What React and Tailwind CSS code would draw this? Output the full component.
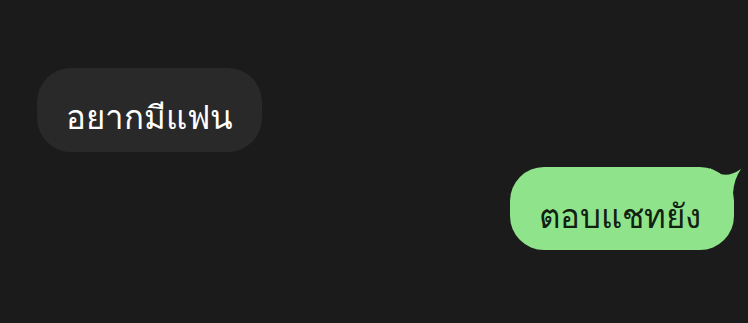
export default function App() {
  return (
    <div className="w-[748px] h-[323px] bg-[#1b1b1b] overflow-hidden flex flex-col" style={{ fontFamily: '"Noto Sans", "DejaVu Sans", sans-serif' }}>
      <div className="pt-[68px] pl-[37px]">
        <div className="flex items-center justify-center w-[225px] h-[84px] pt-[13px] rounded-[34px] bg-[#292929] text-white text-[33px] leading-none">
          อยากมีแฟน
        </div>
      </div>
      <div className="flex justify-end pt-[15px] pr-[14px]">
        <div className="relative flex items-center justify-center w-[224px] h-[83px] pt-[13px] pr-[4px] rounded-[34px] bg-[#8fe38b] text-[#112011] text-[33px] leading-none">
          ตอบแชทยัง
          <svg className="absolute left-[200px] top-0" width="40" height="40" viewBox="0 0 40 40">
            <path d="M0 1 Q14 14 31 2 Q24 12 23 26 L0 26 Z" fill="#8fe38b" />
          </svg>
        </div>
      </div>
    </div>
  );
}
